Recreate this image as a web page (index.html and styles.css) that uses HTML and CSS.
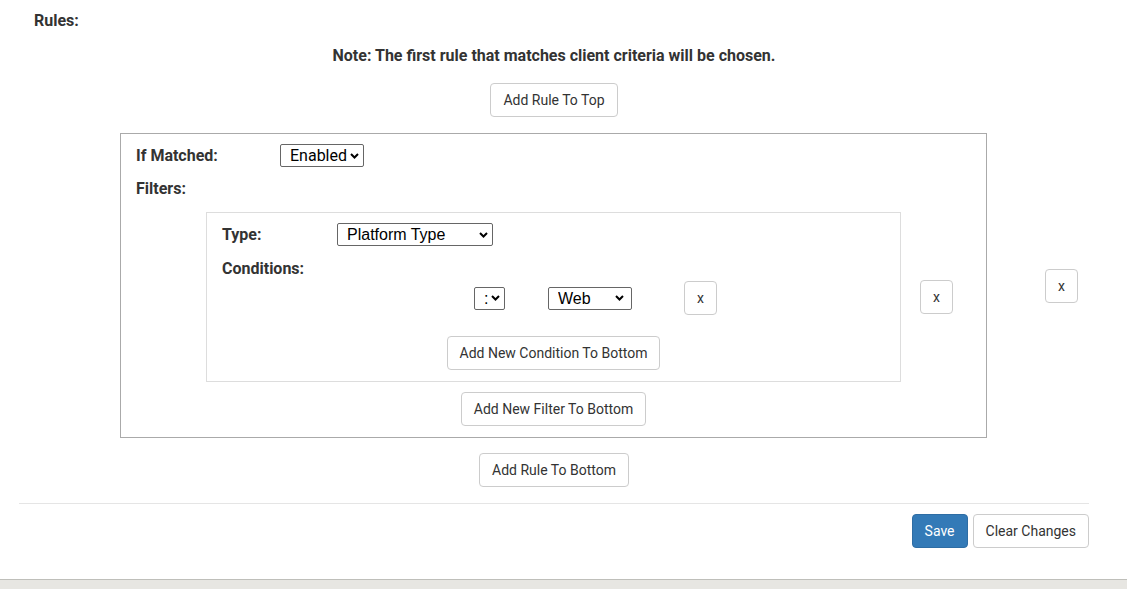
FILE: index.html
```html
<!DOCTYPE html>
<html>
<head>
<meta charset="utf-8">
<link rel="stylesheet" href="styles.css">
</head>
<body>
<div class="container">
  <div class="section-title">Rules:</div>
  <div class="note">Note: The first rule that matches client criteria will be chosen.</div>
  <div class="center top-add"><button class="btn">Add Rule To Top</button></div>

  <div class="rule-row">
    <div class="rule-box">
      <div class="field-row">
        <label class="label label-rule">If Matched:</label>
        <span class="sel-wrap w-enabled">
          <select class="sel f-roboto"><option>Enabled</option></select>
          <svg class="chev" width="9" height="6" viewBox="0 0 9 6"><path d="M1 1 L4.5 4.5 L8 1" fill="none" stroke="#000" stroke-width="2"/></svg>
        </span>
      </div>
      <div class="label filters-label">Filters:</div>
      <div class="filter-row">
        <div class="filter-box">
          <div class="field-row">
            <label class="label label-filter">Type:</label>
            <span class="sel-wrap w-type">
              <select class="sel f-arial"><option>Platform Type</option></select>
              <svg class="chev" width="9" height="6" viewBox="0 0 9 6"><path d="M1 1 L4.5 4.5 L8 1" fill="none" stroke="#000" stroke-width="2"/></svg>
            </span>
          </div>
          <div class="label conditions-label">Conditions:</div>
          <div class="condition-row">
            <span class="sel-wrap w-op">
              <select class="sel f-arial"><option>:</option></select>
              <svg class="chev" width="9" height="6" viewBox="0 0 9 6"><path d="M1 1 L4.5 4.5 L8 1" fill="none" stroke="#000" stroke-width="2"/></svg>
            </span>
            <span class="sel-wrap w-web">
              <select class="sel f-arial"><option>Web</option></select>
              <svg class="chev" width="9" height="6" viewBox="0 0 9 6"><path d="M1 1 L4.5 4.5 L8 1" fill="none" stroke="#000" stroke-width="2"/></svg>
            </span>
            <button class="btn btn-x">x</button>
          </div>
          <div class="center cond-add"><button class="btn">Add New Condition To Bottom</button></div>
        </div>
        <button class="btn btn-x">x</button>
      </div>
      <div class="center filter-add"><button class="btn">Add New Filter To Bottom</button></div>
    </div>
    <button class="btn btn-x">x</button>
  </div>

  <div class="center rule-add"><button class="btn">Add Rule To Bottom</button></div>
  <hr class="divider">
  <div class="actions">
    <button class="btn btn-primary">Save</button>
    <button class="btn">Clear Changes</button>
  </div>
</div>
<div class="footer-bar"></div>
</body>
</html>
```

FILE: styles.css
```css
html, body {
  margin: 0;
  padding: 0;
  background: #fff;
}
body {
  font-family: Roboto, "Liberation Sans", sans-serif;
  font-size: 14px;
  line-height: 20px;
  color: #333;
}
.container {
  margin: 0 38px 0 19px;
  padding-top: 11px;
}
.section-title {
  font-weight: bold;
  font-size: 16px;
  padding-left: 15px;
}
.note {
  font-weight: bold;
  font-size: 16px;
  text-align: center;
  margin-top: 15px;
}
.center {
  display: flex;
  justify-content: center;
}
.top-add {
  margin-top: 17px;
}
.btn {
  font-family: Roboto, "Liberation Sans", sans-serif;
  font-size: 14px;
  line-height: 20px;
  padding: 6px 12px;
  color: #333;
  background: #fff;
  border: 1px solid #ccc;
  border-radius: 4px;
  margin: 0;
  cursor: pointer;
}
.btn-primary {
  background: #337ab7;
  border-color: #2e6da4;
  color: #fff;
}
.btn-x {
  flex: none;
}
.rule-row {
  display: flex;
  align-items: center;
  margin-top: 16px;
  margin-left: 101px;
  gap: 58px;
}
.rule-box {
  width: 865px;
  border: 1px solid #aaa;
  padding: 10px 0 11px 0;
}
.field-row {
  display: flex;
  align-items: center;
  height: 23px;
}
.label {
  font-weight: bold;
  font-size: 16px;
}
.rule-box > .field-row,
.rule-box > .filters-label {
  padding-left: 15px;
}
.label-rule {
  width: 144px;
}
.label-filter {
  width: 115px;
}
.filters-label {
  margin-top: 12px;
}
.filter-row {
  display: flex;
  align-items: center;
  margin-top: 13px;
  margin-left: 85px;
  gap: 19px;
}
.filter-box {
  width: 693px;
  border: 1px solid #ddd;
  padding: 10px 0 11px 0;
}
.filter-box > .field-row,
.filter-box > .conditions-label {
  padding-left: 15px;
}
.conditions-label {
  margin-top: 13px;
}
.condition-row {
  display: flex;
  align-items: center;
  margin-top: 2px;
  padding-left: 267px;
}
.sel-wrap {
  display: inline-flex;
  align-items: center;
  box-sizing: border-box;
  height: 23px;
  border: 1px solid #666;
  border-radius: 2px;
  background: #fff;
  padding: 0 4px 0 9px;
  flex: none;
}
.sel {
  appearance: none;
  -webkit-appearance: none;
  border: 0;
  outline: 0;
  background: transparent;
  font-size: 16px;
  line-height: 21px;
  height: 21px;
  margin: 0;
  padding: 0;
  color: #000;
  flex: 1 1 auto;
  min-width: 0;
}
.chev {
  flex: none;
  display: block;
}
.f-roboto {
  font-family: Roboto, sans-serif;
}
.f-arial {
  font-family: "Liberation Sans", Arial, sans-serif;
}
.w-enabled {
  width: 84px;
}
.w-type {
  width: 156px;
}
.w-op {
  width: 31px;
  margin-right: 43px;
}
.w-web {
  width: 84px;
  margin-right: 52px;
  padding-right: 7px;
}
.cond-add {
  margin-top: 21px;
}
.filter-add {
  margin-top: 10px;
}
.rule-add {
  margin-top: 15px;
}
.divider {
  border: 0;
  border-top: 1px solid #e5e5e5;
  margin: 16px 0 10px 0;
  height: 0;
}
.actions {
  display: flex;
  justify-content: flex-end;
  gap: 5px;
}
.footer-bar {
  margin-top: 31px;
  height: 9px;
  background: #e7e6e2;
  border-top: 1px solid #bfbfba;
}
```
